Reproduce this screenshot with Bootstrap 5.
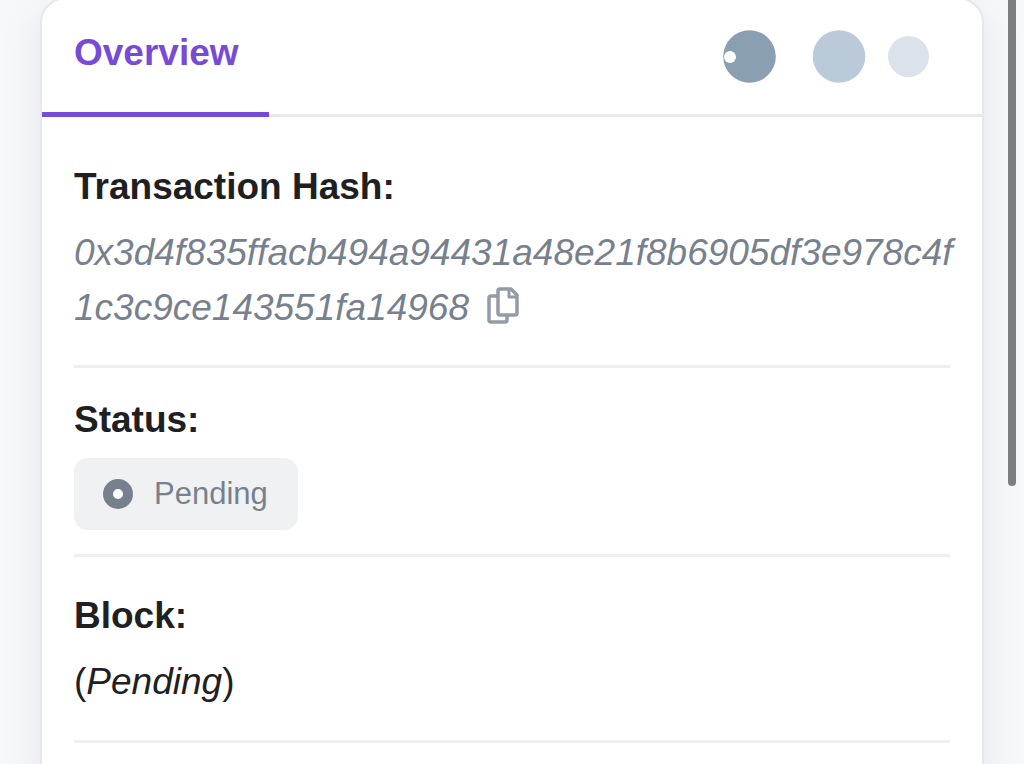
<!DOCTYPE html>
<html lang="en">
<head>
<meta charset="utf-8">
<meta name="viewport" content="width=device-width, initial-scale=1">
<title>Transaction Overview</title>
<link href="https://cdn.jsdelivr.net/npm/bootstrap@5.3.0/dist/css/bootstrap.min.css" rel="stylesheet">
<style>
  body { font-family: "Liberation Sans", Arial, sans-serif; background: #f7f8fa; color: #1e2022; }
  .page { padding: 0 40px; }
  .tx-card { margin-top: -3px; min-height: calc(100vh + 40px); border: 2px solid #e7e8ee; border-radius: 26px; box-shadow: 0 12px 38px rgba(110, 120, 140, .14); color: inherit; }
  .tx-head { border-bottom: 3px solid #e7e8ec; background: none; }
  .tx-tab { width: 227px; height: 118px; margin-bottom: -3px; padding: 28px 0 0 32px; border-bottom: 5px solid #784bd6; font-size: 37px; line-height: 52px; color: #784bd6; }
  .tx-tab:hover { color: #6a3dc8; }
  .dots { margin: 24px 52px 0 0; }
  .tx-row { border-bottom: 3px solid #eeeff2; }
  .tx-label { margin-bottom: 11px; font-size: 37px; line-height: 55px; }
  .tx-value { font-size: 37px; line-height: 55px; }
  .muted { color: #77818d; }
  .hash { margin-right: -8px; overflow-wrap: anywhere; }
  .copy-btn { margin-left: 7px; vertical-align: -5px; }
  .status-pill { height: 72px; padding: 0 30px 0 29px; gap: 21px; border-radius: 14px; background: #f0f1f3; font-size: 31px; line-height: 48px; }
  .row-hash { padding: 42px 0 30px; }
  .row-status { padding: 24px 0; }
  .row-block { padding: 31px 0; }
  .scroll-thumb { right: 8px; width: 8px; height: 486px; border-radius: 0 0 4px 4px; background: #7c7d7e; }
</style>
</head>
<body>
<div class="page vh-100 overflow-hidden position-relative">
  <main class="card tx-card">
    <div class="tx-head d-flex justify-content-between align-items-start">
      <a href="#overview" class="tx-tab fw-bold text-decoration-none">Overview</a>
      <svg class="dots" width="208" height="64" viewBox="0 0 208 64" aria-hidden="true">
        <circle cx="27.500" cy="33.500" r="26.300" fill="#8a9fb2"/>
        <circle cx="8" cy="34" r="6" fill="#fff"/>
        <circle cx="117" cy="33.500" r="26.300" fill="#bbcad9"/>
        <circle cx="186.500" cy="33.500" r="20.500" fill="#dbe2ea"/>
      </svg>
    </div>
    <section id="overview" class="px-4 mx-2">
      <div class="tx-row row-hash">
        <h2 class="tx-label fw-bold">Transaction Hash:</h2>
        <div class="tx-value muted hash"><em>0x3d4f835ffacb494a94431a48e21f8b6905df3e978c4f1c3c9ce143551fa14968</em>
          <button type="button" class="copy-btn btn border-0 p-0 lh-1" aria-label="Copy hash">
            <svg class="d-block" width="34" height="38" viewBox="0 0 34 38" fill="none" stroke="#939ba5" stroke-width="3.500" stroke-linejoin="round">
              <path d="M11 9H5Q3 9 3 11V33Q3 35 5 35H19Q21 35 21 33V28"/>
              <path d="M14 2H25L31 8V26Q31 28 29 28H14Q12 28 12 26V4Q12 2 14 2Z"/>
              <path d="M23 2V10H31" stroke-width="3"/>
            </svg>
          </button>
        </div>
      </div>
      <div class="tx-row row-status">
        <h2 class="tx-label fw-bold">Status:</h2>
        <span class="status-pill muted d-inline-flex align-items-center align-top">
          <svg width="30" height="30" viewBox="0 0 30 30" aria-hidden="true"><circle cx="15" cy="15" r="10" fill="#fff" stroke="#77818e" stroke-width="10"/></svg>
          Pending
        </span>
      </div>
      <div class="tx-row row-block">
        <h2 class="tx-label fw-bold">Block:</h2>
        <div class="tx-value">(<em>Pending</em>)</div>
      </div>
    </section>
  </main>
  <div class="scroll-thumb position-absolute top-0" aria-hidden="true"></div>
</div>
<script src="https://cdn.jsdelivr.net/npm/bootstrap@5.3.0/dist/js/bootstrap.bundle.min.js"></script>
</body>
</html>
